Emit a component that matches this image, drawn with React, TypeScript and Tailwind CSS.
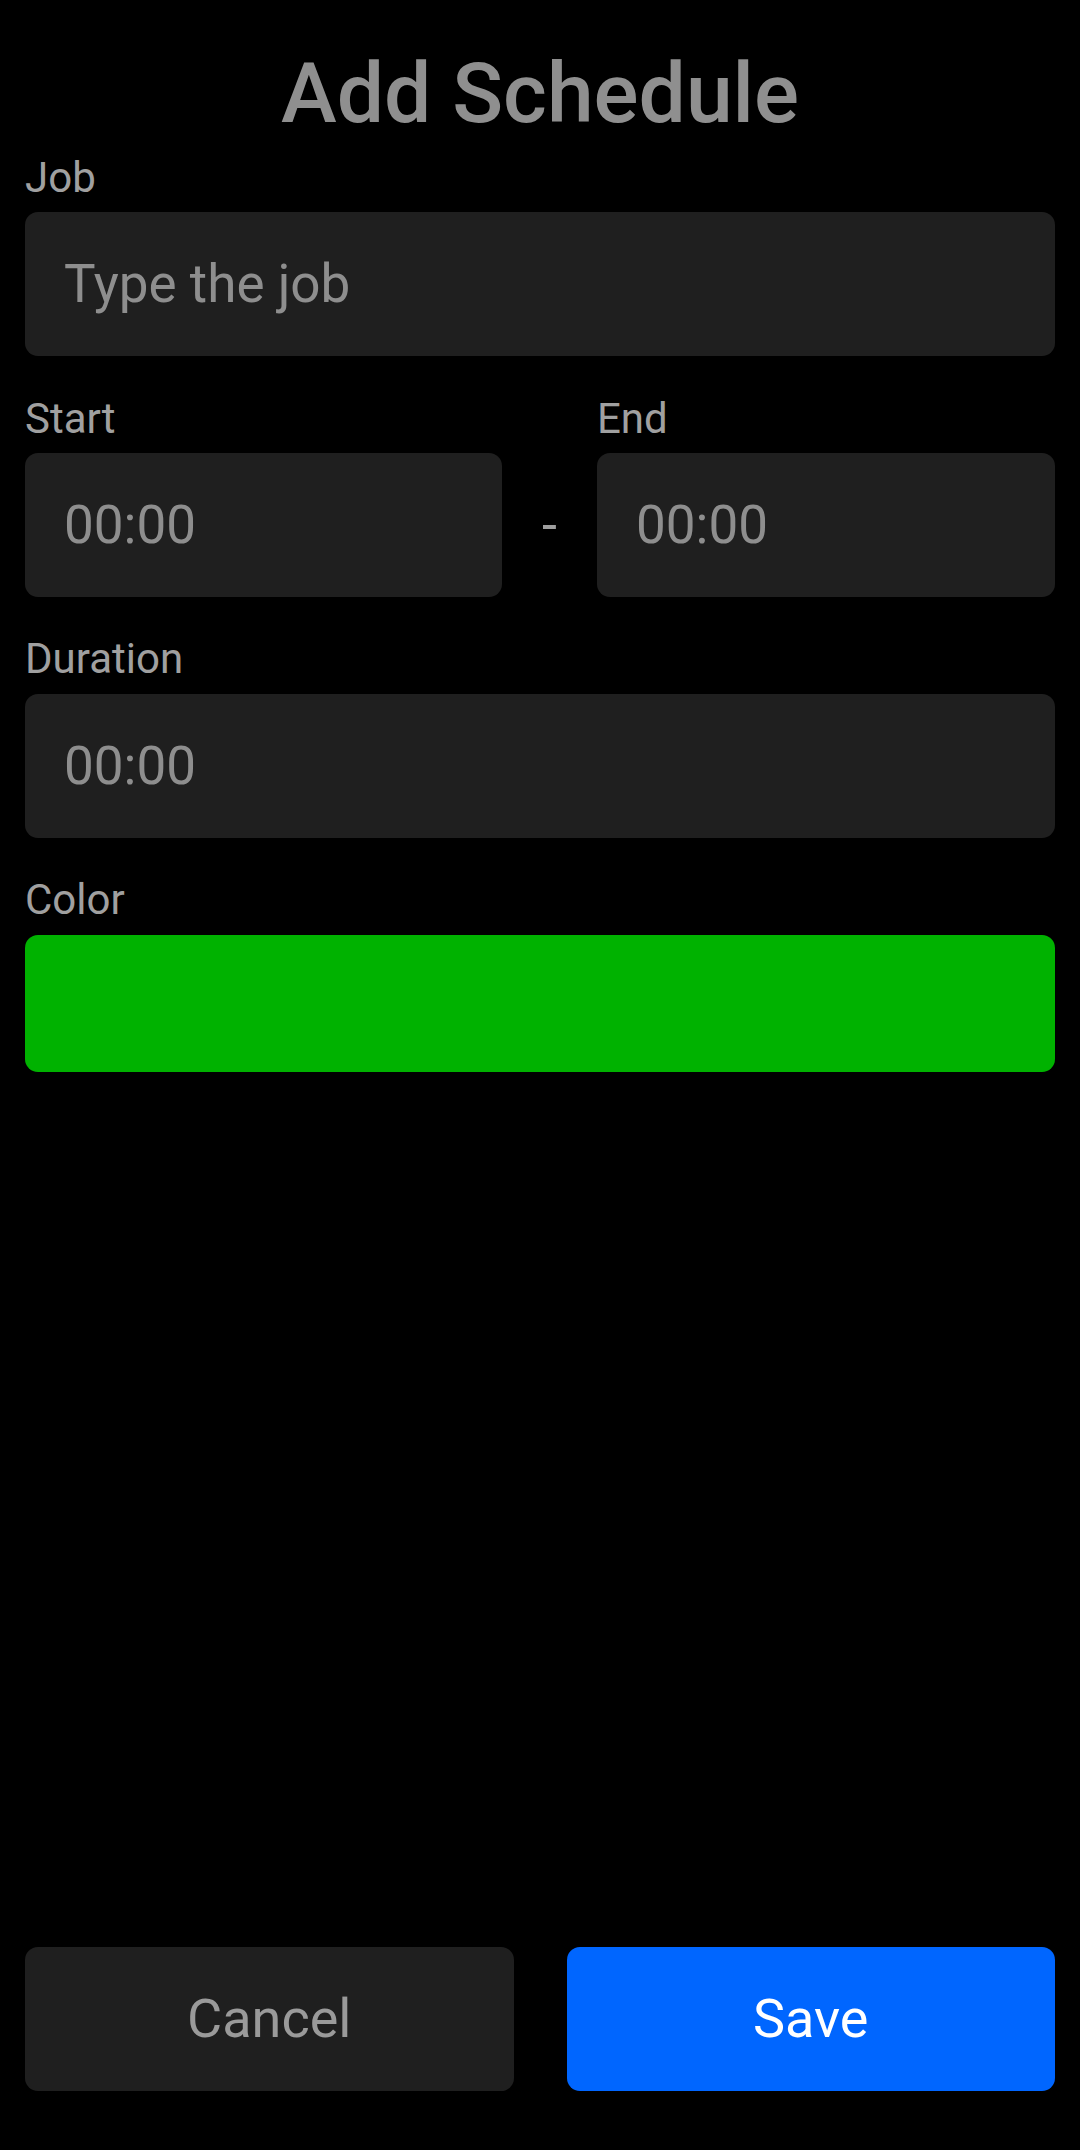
import React from "react";

const font = { fontFamily: "Roboto, 'Noto Sans', sans-serif" };

function Label({ children, className = "" }: { children: React.ReactNode; className?: string }) {
  return (
    <div className={`text-[42px] leading-[42px] text-[#a0a0a0] ${className}`}>{children}</div>
  );
}

function Field({ text, className = "" }: { text: string; className?: string }) {
  return (
    <div className={`h-[144px] rounded-[13px] bg-[#1f1f1f] flex items-center pl-[39px] text-[53px] leading-[54px] text-[#8e8e8e] ${className}`}>
      {text}
    </div>
  );
}

export default function App() {
  return (
    <div className="w-[1080px] h-[2150px] bg-black flex flex-col px-[25px]" style={font}>
      <h1 className="pt-[52px] text-center text-[84px] leading-[84px] font-medium text-[#8f8f8f]">
        Add Schedule
      </h1>

      <Label className="mt-[21px]">Job</Label>
      <Field text="Type the job" className="mt-[13px]" />

      <div className="flex mt-[42px]">
        <div className="w-[477px] flex flex-col">
          <Label>Start</Label>
          <Field text="00:00" className="mt-[13px]" />
        </div>
        <div className="w-[95px] flex flex-col">
          <div className="h-[42px]" />
          <div className="mt-[13px] h-[144px] flex items-center justify-center text-[54px] leading-[54px] text-[#9e9e9e]">
            -
          </div>
        </div>
        <div className="flex-1 flex flex-col">
          <Label>End</Label>
          <Field text="00:00" className="mt-[13px] pl-[38px]" />
        </div>
      </div>

      <Label className="mt-[41px]">Duration</Label>
      <Field text="00:00" className="mt-[14px]" />

      <Label className="mt-[41px]">Color</Label>
      <div className="mt-[14px] h-[137px] rounded-[13px] bg-[#00b200]" />

      <div className="mt-auto mb-[59px] flex gap-[53px]">
        <button className="flex-1 h-[144px] rounded-[13px] bg-[#1f1f1f] text-[54px] leading-[54px] text-[#9a9a9a]">
          Cancel
        </button>
        <button className="flex-1 h-[144px] rounded-[13px] bg-[#0066ff] text-[54px] leading-[54px] text-white">
          Save
        </button>
      </div>
    </div>
  );
}
